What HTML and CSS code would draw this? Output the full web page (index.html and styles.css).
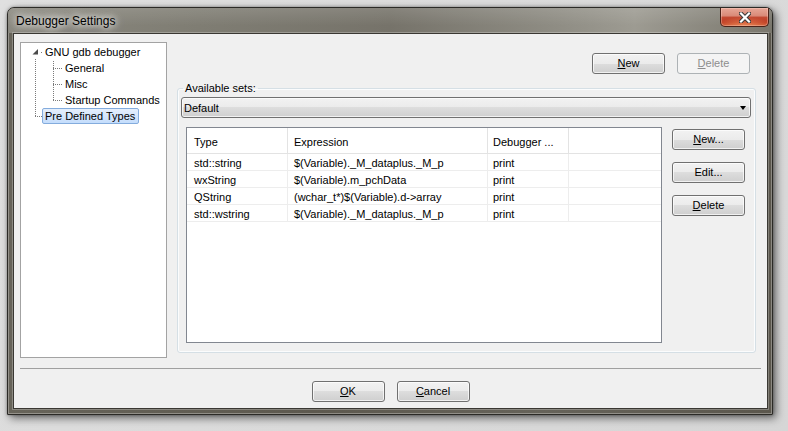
FILE: index.html
```html
<!DOCTYPE html>
<html>
<head>
<meta charset="utf-8">
<title>Debugger Settings</title>
<link rel="stylesheet" href="styles.css">
</head>
<body>
<div class="window">
  <div class="titlebar">
    <span class="title">Debugger Settings</span>
    <div class="close">
      <svg width="12" height="11" viewBox="0 0 12 11">
        <path d="M2 1.5 L10 9.5 M10 1.5 L2 9.5" stroke="#3a3a3a" stroke-width="4.2" stroke-linecap="square"/>
        <path d="M2 1.5 L10 9.5 M10 1.5 L2 9.5" stroke="#ffffff" stroke-width="2.2" stroke-linecap="square"/>
      </svg>
    </div>
  </div>
  <div class="client">
    <div class="main">
      <div class="tree">
        <svg class="tree-lines" width="60" height="80" viewBox="0 0 60 80">
          <g stroke="#7a7a7a" stroke-width="1" stroke-dasharray="1 1" shape-rendering="crispEdges" fill="none">
            <line x1="14.5" y1="16" x2="14.5" y2="74"/>
            <line x1="14" y1="73.5" x2="21" y2="73.5"/>
            <line x1="32.5" y1="18" x2="32.5" y2="58"/>
            <line x1="32" y1="25.5" x2="41" y2="25.5"/>
            <line x1="32" y1="41.5" x2="41" y2="41.5"/>
            <line x1="32" y1="57.5" x2="41" y2="57.5"/>
          </g>
          <rect x="20" y="9" width="1" height="1" fill="#7a7a7a"/>
          <polygon points="17,6 17,11.5 11.5,11.5" fill="#4a4a4a"/>
        </svg>
        <div class="node root"><span class="label">GNU gdb debugger</span></div>
        <div class="node child"><span class="label">General</span></div>
        <div class="node child"><span class="label">Misc</span></div>
        <div class="node child"><span class="label">Startup Commands</span></div>
        <div class="node root"><span class="label selected">Pre Defined Types</span></div>
      </div>
      <div class="panel">
        <div class="toprow">
          <button class="btn"><u>N</u>ew</button>
          <button class="btn" disabled><u>D</u>elete</button>
        </div>
        <fieldset class="group">
          <legend>Available sets:</legend>
          <div class="group-body">
            <div class="combo"><span class="combo-text">Default</span><span class="arrow"></span></div>
            <div class="listrow">
              <div class="list">
                <div class="lrow head">
                  <div class="cell c1">Type</div>
                  <div class="cell c2">Expression</div>
                  <div class="cell c3">Debugger ...</div>
                  <div class="cell c4"></div>
                </div>
                <div class="lrow">
                  <div class="cell c1">std::string</div>
                  <div class="cell c2">$(Variable)._M_dataplus._M_p</div>
                  <div class="cell c3">print</div>
                  <div class="cell c4"></div>
                </div>
                <div class="lrow">
                  <div class="cell c1">wxString</div>
                  <div class="cell c2">$(Variable).m_pchData</div>
                  <div class="cell c3">print</div>
                  <div class="cell c4"></div>
                </div>
                <div class="lrow">
                  <div class="cell c1">QString</div>
                  <div class="cell c2">(wchar_t*)$(Variable).d-&gt;array</div>
                  <div class="cell c3">print</div>
                  <div class="cell c4"></div>
                </div>
                <div class="lrow">
                  <div class="cell c1">std::wstring</div>
                  <div class="cell c2">$(Variable)._M_dataplus._M_p</div>
                  <div class="cell c3">print</div>
                  <div class="cell c4"></div>
                </div>
              </div>
              <div class="sidebtns">
                <button class="btn"><u>N</u>ew...</button>
                <button class="btn">Edit...</button>
                <button class="btn"><u>D</u>elete</button>
              </div>
            </div>
          </div>
        </fieldset>
      </div>
    </div>
    <div class="sep"></div>
    <div class="footer">
      <button class="btn"><u>O</u>K</button>
      <button class="btn"><u>C</u>ancel</button>
    </div>
  </div>
</div>
</body>
</html>
```

FILE: styles.css
```css
html, body {
  margin: 0;
}
body {
  width: 788px;
  height: 431px;
  overflow: hidden;
  box-sizing: border-box;
  padding: 7px 0 0 7px;
  background: linear-gradient(135deg, #e0e0e0 0%, #d6d6d6 100%);
  font-family: "Liberation Sans", Arial, sans-serif;
  font-size: 11px;
  color: #000;
}

.window {
  width: 766px;
  height: 408px;
  box-sizing: border-box;
  border: 1px solid #2b2a26;
  border-radius: 7px 7px 0 0;
  padding: 0 4px 5px 5px;
  display: flex;
  flex-direction: column;
  background: linear-gradient(to right, #67645a 0%, #5d594f 40%, #66635a 70%, #5b574d 100%);
  box-shadow: inset 0 0 0 1px rgba(255, 255, 255, 0.3), 3px 3px 9px rgba(0, 0, 0, 0.55), 0 0 3px rgba(0, 0, 0, 0.35);
}

.titlebar {
  height: 25px;
  flex: none;
  margin: 0 -4px 0 -5px;
  padding-left: 8px;
  display: flex;
  align-items: flex-start;
  justify-content: space-between;
  border-radius: 6px 6px 0 0;
  background:
    linear-gradient(to bottom, rgba(255, 255, 255, 0.12), rgba(0, 0, 0, 0) 70%),
    linear-gradient(to right, #8a887f 0%, #7f7d73 25%, #76736a 50%, #8f8d84 72%, #9d9b92 82%, #7a776d 100%);
}

.title {
  padding-top: 6px;
  font-size: 12px;
  line-height: 15px;
  color: #000;
  text-shadow: 0 0 6px rgba(255, 255, 255, 0.95), 0 0 10px rgba(255, 255, 255, 0.8), 0 0 14px rgba(255, 255, 255, 0.6);
}

.close {
  width: 49px;
  height: 19px;
  box-sizing: border-box;
  margin-right: 3px;
  border: 1px solid #4a2319;
  border-top: none;
  border-radius: 0 0 5px 5px;
  background:
    radial-gradient(ellipse 60% 50% at 50% 100%, rgba(255, 170, 110, 0.6), rgba(255, 170, 110, 0) 100%),
    linear-gradient(to bottom, #e7a797 0%, #d98977 45%, #c34a33 50%, #bf3d24 80%, #c9502f 100%);
  box-shadow: inset 0 0 0 1px rgba(255, 220, 210, 0.35);
  display: flex;
  align-items: center;
  justify-content: center;
}

.client {
  flex: 1;
  min-height: 0;
  box-sizing: border-box;
  background: #f0f0f0;
  border: 1px solid #3a3833;
  box-shadow: 0 0 0 1px rgba(255, 255, 255, 0.25);
  padding: 8px 6px 0 6px;
  display: flex;
  flex-direction: column;
}

.main {
  display: flex;
  align-items: flex-start;
}

/* tree */
.tree {
  position: relative;
  width: 147px;
  height: 316px;
  box-sizing: border-box;
  border: 1px solid #a3a3a3;
  background: #fff;
  padding-top: 1px;
  flex: none;
}
.tree-lines {
  position: absolute;
  left: 0;
  top: 0;
}
.node {
  height: 16px;
  display: flex;
  align-items: center;
}
.node.root { padding-left: 21px; }
.node.child { padding-left: 41px; }
.label {
  position: relative;
  height: 16px;
  box-sizing: border-box;
  line-height: 14px;
  padding: 0 3px 0 2px;
  border: 1px solid transparent;
  white-space: nowrap;
}
.label.selected {
  border-color: #84acdd;
  border-radius: 2px;
  background: linear-gradient(to bottom, #e5effc, #c4ddfc);
}

/* right panel */
.panel {
  margin-left: 10px;
  width: 579px;
  flex: none;
}
.toprow {
  padding-top: 11px;
  padding-right: 6px;
  display: flex;
  justify-content: flex-end;
  gap: 12px;
}

.btn {
  width: 73px;
  height: 21px;
  box-sizing: border-box;
  padding: 0;
  margin: 0;
  border: 1px solid #707070;
  border-radius: 3px;
  background: linear-gradient(to bottom, #f2f2f2 0%, #ebebeb 50%, #dddddd 50%, #cfcfcf 100%);
  box-shadow: inset 0 0 0 1px rgba(255, 255, 255, 0.7);
  font-family: "Liberation Sans", Arial, sans-serif;
  font-size: 11px;
  line-height: 17px;
  color: #000;
}
.btn:disabled {
  border-color: #adb2b5;
  background: #f4f4f4;
  box-shadow: none;
  color: #8d8d8d;
}
.btn u {
  text-underline-offset: 1px;
}

.group {
  margin: 8px 0 0 0;
  padding: 0;
  min-width: 0;
  border: 1px solid #d5dfe5;
  border-radius: 3px;
  box-shadow: inset 0 0 0 1px #fbfcfd;
}
.group legend {
  margin-left: 5px;
  padding: 0 2px;
  font-size: 11px;
  line-height: 13px;
}
.group-body {
  padding: 2px 4px 9px 3px;
}

.combo {
  height: 21px;
  box-sizing: border-box;
  border: 1px solid #707070;
  border-radius: 3px;
  background: linear-gradient(to bottom, #f2f2f2 0%, #ebebeb 50%, #dddddd 50%, #cfcfcf 100%);
  box-shadow: inset 0 0 0 1px rgba(255, 255, 255, 0.7);
  display: flex;
  align-items: center;
  justify-content: space-between;
  padding: 0 4px 0 2px;
}
.arrow {
  width: 0;
  height: 0;
  border-left: 3.5px solid transparent;
  border-right: 3.5px solid transparent;
  border-top: 4px solid #000;
  margin-top: 1px;
}

.listrow {
  margin-top: 9px;
  display: flex;
  align-items: flex-start;
}
.list {
  margin-left: 5px;
  width: 476px;
  height: 216px;
  box-sizing: border-box;
  border: 1px solid #828790;
  background: #fff;
  flex: none;
}
.lrow {
  display: flex;
  height: 17px;
  box-sizing: border-box;
  border-bottom: 1px solid #ededed;
}
.lrow.head {
  height: 26px;
  border-bottom: 1px solid #e3e3e3;
}
.cell {
  box-sizing: border-box;
  border-right: 1px solid #ededed;
  white-space: nowrap;
  overflow: hidden;
  line-height: 16px;
  padding-top: 1px;
}
.head .cell {
  border-right-color: #e3e3e3;
  line-height: 25px;
  padding-top: 2px;
}
.c1 { width: 101px; padding-left: 7px; }
.c2 { width: 200px; padding-left: 6px; }
.c3 { width: 81px; padding-left: 5px; }
.c4 { flex: 1; border-right: none; }

.sidebtns {
  margin-left: 10px;
  padding-top: 2px;
  display: flex;
  flex-direction: column;
  gap: 12px;
}

.sep {
  margin-top: 10px;
  height: 1px;
  background: #a0a0a0;
  flex: none;
}

.footer {
  margin-top: 12px;
  display: flex;
  justify-content: center;
  gap: 12px;
}
```
